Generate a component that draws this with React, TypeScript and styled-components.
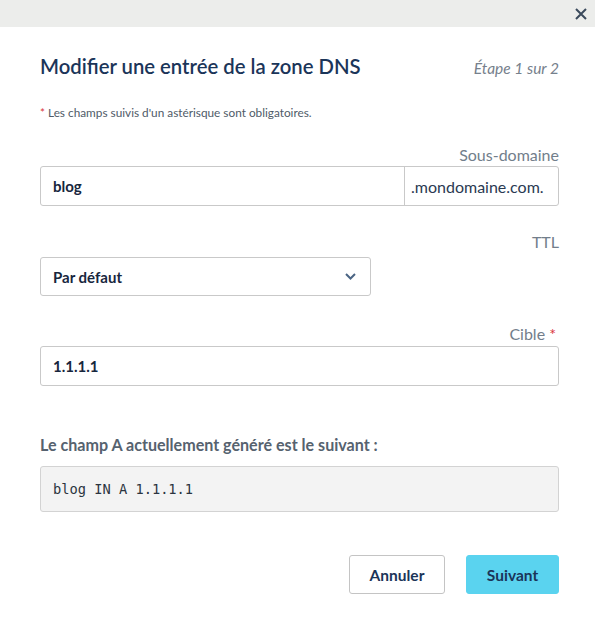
import React from 'react';
import styled, { createGlobalStyle } from 'styled-components';

const GlobalStyle = createGlobalStyle`
  body {
    margin : 0;
    font-family : Lato, "Open Sans", sans-serif;
    background : #ffffff;
  }
`

const Modal = styled.div`
  width : 595px;
  height : 623px;
  background : #ffffff;
  box-sizing : border-box;
`

const TopBar = styled.div`
  height : 27px;
  background : #ecedeb;
  display : flex;
  justify-content : flex-end;
  align-items : center;
  padding-right : 4px;
`

const CloseButton = styled.button`
  border : none;
  background : transparent;
  width : 20px;
  height : 20px;
  padding : 0;
  display : flex;
  align-items : center;
  justify-content : center;
  cursor : pointer;
`

const Body = styled.div`
  padding : 0 36px 0 40px;
`

const Header = styled.div`
  display : flex;
  justify-content : space-between;
  align-items : baseline;
  margin-top : 27px;
`

const Title = styled.h1`
  margin : 0;
  font-size : 20.3px;
  line-height : 24px;
  font-weight : 600;
  color : #1b3559;
`

const Step = styled.span`
  font-size : 15.5px;
  font-style : italic;
  color : #76808c;
`

const Note = styled.p`
  margin : 28px 0 0;
  font-size : 11.8px;
  line-height : 14px;
  color : #4f5b68;
`

const Star = styled.span`
  color : #d9343a;
  margin-right : 3px;
`

const Field = styled.div<{ $top: number }>`
  margin-top : ${p => p.$top}px;
  display : flex;
  flex-direction : column;
`

const Label = styled.label<{ $gap: number }>`
  align-self : flex-end;
  font-size : 16px;
  line-height : 18px;
  color : #727e8b;
  margin-bottom : ${p => p.$gap}px;
`

const InputGroup = styled.div`
  display : flex;
  height : 40px;
  border : 1px solid #c9c9c9;
  border-radius : 3px;
  box-sizing : border-box;
  overflow : hidden;
`

const TextInput = styled.input`
  flex : 1;
  min-width : 0;
  border : none;
  outline : none;
  padding : 0 12px;
  font-family : inherit;
  font-size : 15px;
  font-weight : 700;
  color : #17263d;
  background : transparent;
`

const Suffix = styled.div`
  width : 154px;
  box-sizing : border-box;
  display : flex;
  align-items : center;
  padding : 0 2px 0 6px;
  border-left : 1px solid #c9c9c9;
  font-size : 16px;
  color : #2a3a52;
  white-space : nowrap;
`

const Select = styled.div`
  width : 331px;
  height : 39px;
  border : 1px solid #c9c9c9;
  border-radius : 3px;
  box-sizing : border-box;
  display : flex;
  align-items : center;
  justify-content : space-between;
  padding : 0 14px 0 12px;
  font-size : 15px;
  font-weight : 700;
  color : #17263d;
`

const SectionTitle = styled.div`
  margin-top : 50px;
  font-size : 16.1px;
  line-height : 18px;
  font-weight : 700;
  color : #56626f;
`

const CodeBox = styled.pre`
  margin : 12px 0 0;
  height : 46px;
  box-sizing : border-box;
  display : flex;
  align-items : center;
  padding : 0 12px;
  background : #f3f3f3;
  border : 1px solid #d3d3d3;
  border-radius : 3px;
  font-family : "DejaVu Sans Mono", monospace;
  font-size : 13.7px;
  color : #2b3440;
`

const Actions = styled.div`
  display : flex;
  justify-content : flex-end;
  gap : 21px;
  margin-top : 43px;
`

const Button = styled.button<{ $primary?: boolean }>`
  height : 39px;
  width : ${p => (p.$primary ? 93 : 96)}px;
  border-radius : 3px;
  border : 1px solid ${p => (p.$primary ? '#5ad3ef' : '#c4c4c4')};
  background : ${p => (p.$primary ? '#5ad3ef' : '#ffffff')};
  font-family : inherit;
  font-size : 15.5px;
  font-weight : 700;
  color : #1b3559;
  cursor : pointer;
`

const App = () => {
  return (
    <>
      <GlobalStyle />
      <Modal>
        <TopBar>
          <CloseButton aria-label="Fermer">
            <svg width="12" height="12" viewBox="0 0 12 12">
              <path d="M1 1 L11 11 M11 1 L1 11" stroke="#3b4a5c" strokeWidth="2" />
            </svg>
          </CloseButton>
        </TopBar>
        <Body>
          <Header>
            <Title>Modifier une entrée de la zone DNS</Title>
            <Step>Étape 1 sur 2</Step>
          </Header>
          <Note>
            <Star>*</Star>Les champs suivis d'un astérisque sont obligatoires.
          </Note>

          <Field $top={26}>
            <Label $gap={2}>Sous-domaine</Label>
            <InputGroup>
              <TextInput defaultValue="blog" />
              <Suffix>.mondomaine.com.</Suffix>
            </InputGroup>
          </Field>

          <Field $top={27}>
            <Label $gap={6}>TTL</Label>
            <Select>
              <span>Par défaut</span>
              <svg width="11" height="7" viewBox="0 0 11 7">
                <path d="M1 1 L5.5 5.5 L10 1" stroke="#4b6584" strokeWidth="2" fill="none" />
              </svg>
            </Select>
          </Field>

          <Field $top={29}>
            <Label $gap={3}>
              Cible <Star as="span">*</Star>
            </Label>
            <InputGroup>
              <TextInput defaultValue="1.1.1.1" />
            </InputGroup>
          </Field>

          <SectionTitle>Le champ A actuellement généré est le suivant :</SectionTitle>
          <CodeBox>blog IN A 1.1.1.1</CodeBox>

          <Actions>
            <Button>Annuler</Button>
            <Button $primary>Suivant</Button>
          </Actions>
        </Body>
      </Modal>
    </>
  )
}

export default App
